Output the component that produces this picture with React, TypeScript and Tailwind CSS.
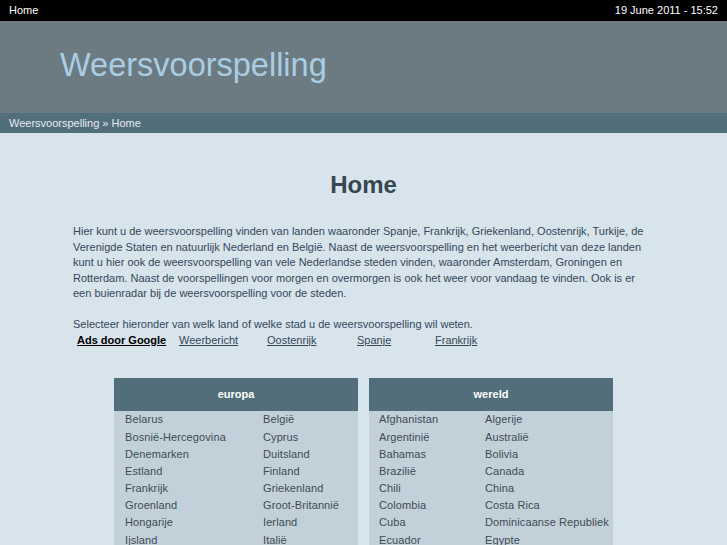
const europa: [string, string][] = [
  ["Belarus", "België"],
  ["Bosnië-Hercegovina", "Cyprus"],
  ["Denemarken", "Duitsland"],
  ["Estland", "Finland"],
  ["Frankrijk", "Griekenland"],
  ["Groenland", "Groot-Britannië"],
  ["Hongarije", "Ierland"],
  ["Ijsland", "Italië"],
];

const wereld: [string, string][] = [
  ["Afghanistan", "Algerije"],
  ["Argentinië", "Australië"],
  ["Bahamas", "Bolivia"],
  ["Brazilië", "Canada"],
  ["Chili", "China"],
  ["Colombia", "Costa Rica"],
  ["Cuba", "Dominicaanse Republiek"],
  ["Ecuador", "Egypte"],
];

function CountryTable({ title, rows, firstCol }: { title: string; rows: [string, string][]; firstCol: string }) {
  return (
    <div className="w-[244px] bg-[#c2d1d9]">
      <div className="h-[33px] bg-[#536e7b] flex items-center justify-center text-[11px] font-bold text-white">
        {title}
      </div>
      {rows.map(([a, b]) => (
        <div key={a} className="flex h-[17.2px] items-center text-[11px] text-[#3d4b54] tracking-[0.1px]">
          <span className={`${firstCol} shrink-0`}>{a}</span>
          <span className="whitespace-nowrap">{b}</span>
        </div>
      ))}
    </div>
  );
}

export default function App() {
  return (
    <div className="min-h-[545px] bg-[#d7e4ec] font-['Liberation_Sans',Arial,sans-serif]">
      {/* top strip */}
      <div className="h-[21px] bg-black flex items-center justify-between px-[9px] text-[11px] text-white">
        <span>Home</span>
        <span>19 June 2011 - 15:52</span>
      </div>

      {/* banner */}
      <div className="h-[92px] bg-[#6c7b82] flex items-center pl-[60px] pb-[3px]">
        <h1 className="text-[32.5px] text-[#a9cde3]">Weersvoorspelling</h1>
      </div>

      {/* breadcrumb */}
      <div className="h-[20px] bg-[#536e7b] flex items-center px-[9px] text-[11px] text-[#e3ebf0]">
        Weersvoorspelling » Home
      </div>

      <div className="px-[73px] pt-[38px]">
        <h2 className="text-center text-[24px] leading-[28px] font-bold text-[#37474f]">Home</h2>

        <div className="mt-[25px] text-[11px] leading-[15.5px] text-[#34475a] whitespace-nowrap">
          <p>
            Hier kunt u de weersvoorspelling vinden van landen waaronder Spanje, Frankrijk, Griekenland, Oostenrijk, Turkije, de
            <br />
            Verenigde Staten en natuurlijk Nederland en België. Naast de weersvoorspelling en het weerbericht van deze landen
            <br />
            kunt u hier ook de weersvoorspelling van vele Nederlandse steden vinden, waaronder Amsterdam, Groningen en
            <br />
            Rotterdam. Naast de voorspellingen voor morgen en overmorgen is ook het weer voor vandaag te vinden. Ook is er
            <br />
            een buienradar bij de weersvoorspelling voor de steden.
          </p>
          <p className="mt-[15.5px]">Selecteer hieronder van welk land of welke stad u de weersvoorspelling wil weten.</p>
          <div className="flex pl-[4px]">
            <a href="#" className="w-[102px] font-bold text-black underline">Ads door Google</a>
            <a href="#" className="w-[88px] underline">Weerbericht</a>
            <a href="#" className="w-[90px] underline">Oostenrijk</a>
            <a href="#" className="w-[78px] underline">Spanje</a>
            <a href="#" className="underline">Frankrijk</a>
          </div>
        </div>
      </div>

      <div className="mt-[30px] flex justify-center gap-[11px]">
        <CountryTable title="europa" rows={europa} firstCol="w-[149px] pl-[11px]" />
        <CountryTable title="wereld" rows={wereld} firstCol="w-[116px] pl-[10px]" />
      </div>
    </div>
  );
}
